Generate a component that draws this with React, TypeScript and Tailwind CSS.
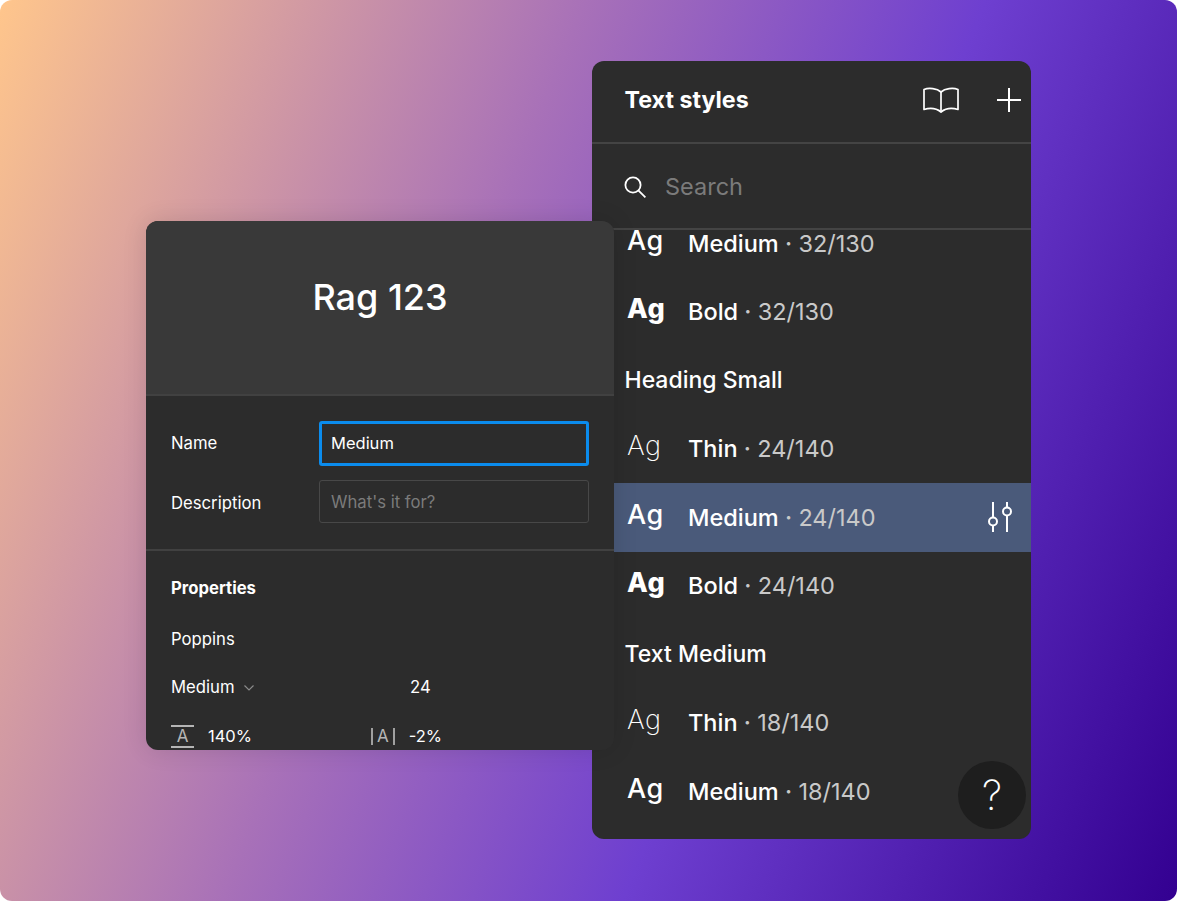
const Sep = () => <span className="text-[#c9c9c9]"> · </span>;

function Row({ ag, name, val, active, low }: { ag: string; name: string; val: string; active?: boolean; low?: boolean }) {
  return (
    <div className={`flex h-[68.5px] items-center pl-[35px] pr-[17px] ${active ? "bg-[#4a5a7a]" : ""}`}>
      <span className={`w-[61px] -translate-y-[3.5px] text-[27px] leading-none tracking-[0.5px] text-white ${ag}`}>Ag</span>
      <span className={`text-[23.5px] font-medium leading-none text-white ${low ? "pt-[1px]" : ""}`}>
        {name}
        <Sep />
        <span className="font-normal text-[#c9c9c9]">{val}</span>
      </span>
      {active && (
        <svg className="ml-auto" width="28" height="32" viewBox="0 0 28 32" fill="none" stroke="#fff" strokeWidth="2">
          <path d="M7 1v15M7 25v6M21 1v5M21 15v16" />
          <circle cx="7" cy="20.5" r="4" />
          <circle cx="21" cy="10.5" r="4" />
        </svg>
      )}
    </div>
  );
}

function Heading({ children }: { children: string }) {
  return <div className="flex h-[68.5px] items-center pl-[32.5px] pt-[1px] text-[23px] font-medium leading-none text-white">{children}</div>;
}

export default function App() {
  return (
    <div className="h-[901px] w-[1177px] overflow-hidden bg-white font-['Inter',sans-serif]">
      <div className="relative h-full w-full overflow-hidden rounded-xl bg-[linear-gradient(112deg,#ffc68c_0%,#a871b8_38%,#6e3fd0_64%,#330091_100%)]">
        {/* Right window */}
        <div className="absolute left-[592px] top-[61px] flex h-[778px] w-[439px] flex-col overflow-hidden rounded-xl bg-[#2c2c2c]">
          <div className="flex h-[81px] shrink-0 items-center pb-[3px] pl-[32.5px] pr-[10px]">
            <span className="text-[23.25px] font-bold leading-none text-white">Text styles</span>
            <svg className="ml-auto" width="38" height="26" viewBox="0 0 38 26" fill="none" stroke="#fff" strokeWidth="1.7" strokeLinejoin="round">
              <path d="M19 5C15 1.5 7 .5 2 2.5V22.5C7 21 14 21 19 25C24 21 31 21 36 22.5V2.5C31 .5 23 1.5 19 5Z" />
              <path d="M19 5V25" />
            </svg>
            <svg className="ml-[37px]" width="24" height="24" viewBox="0 0 24 24" fill="none" stroke="#fff" strokeWidth="2">
              <path d="M12 0v24M0 12h24" />
            </svg>
          </div>
          <div className="h-[2px] shrink-0 bg-[#444444]" />
          <div className="flex h-[84px] shrink-0 items-center pl-[32px] pt-[2px]">
            <svg width="22" height="22" viewBox="0 0 22 22" fill="none" stroke="#fff" strokeWidth="1.8">
              <circle cx="9" cy="9" r="7.6" />
              <path d="M14.6 14.6L21.4 21.4" />
            </svg>
            <span className="ml-[19px] text-[23.5px] leading-none text-[#7b7b7b]">Search</span>
          </div>
          <div className="h-[2px] shrink-0 bg-[#444444]" />
          <div className="min-h-0 flex-1 overflow-hidden">
            <div className="-mt-[21px]">
              <Row ag="font-[450]" name="Medium" val="32/130" low />
              <Row ag="font-extrabold" name="Bold" val="32/130" />
              <Heading>Heading Small</Heading>
              <Row ag="font-extralight" name="Thin" val="24/140" />
              <Row ag="font-[450]" name="Medium" val="24/140" active low />
              <Row ag="font-extrabold" name="Bold" val="24/140" />
              <Heading>Text Medium</Heading>
              <Row ag="font-extralight" name="Thin" val="18/140" />
              <Row ag="font-[450]" name="Medium" val="18/140" />
            </div>
          </div>
          <div className="absolute bottom-[10px] right-[5px] flex h-[68px] w-[68px] items-center justify-center rounded-full bg-[#1e1e1e] text-[41px] font-extralight leading-none text-white">?</div>
        </div>

        {/* Left window */}
        <div className="absolute left-[146px] top-[221px] flex h-[529px] w-[468px] flex-col overflow-hidden rounded-xl bg-[#2c2c2c] shadow-[0_0_24px_rgba(0,0,0,0.12)]">
          <div className="flex h-[173px] shrink-0 justify-center bg-[#393939] pt-[55px]">
            <span className="text-[36px] font-medium leading-[42px] text-white">Rag 123</span>
          </div>
          <div className="h-[2px] shrink-0 bg-[#414141]" />
          <div className="flex flex-col gap-[14px] pl-[25px] pr-[25px] pt-[25px]">
            <div className="flex items-center">
              <span className="w-[148px] text-[16.7px] leading-none text-white">Name</span>
              <div className="flex h-[45px] flex-1 items-center rounded-[3px] border-[3px] border-[#0b8ced] px-[9px] text-[16.5px] leading-none text-white">Medium</div>
            </div>
            <div className="flex items-center">
              <span className="w-[148px] pt-[4px] text-[16.7px] leading-none text-white">Description</span>
              <div className="flex h-[43px] flex-1 items-center rounded-[3px] border border-[#484848] px-[11px] pt-[1px] text-[16.7px] leading-none text-[#7b7b7b]">What's it for?</div>
            </div>
          </div>
          <div className="mt-[26px] h-[2px] shrink-0 bg-[#414141]" />
          <div className="pl-[25px] text-[16.7px] leading-none text-white">
            <div className="mt-[29px] font-bold">Properties</div>
            <div className="mt-[34px]">Poppins</div>
            <div className="mt-[32px] flex items-center">
              <span className="w-[72px]">Medium</span>
              <svg width="12" height="8" viewBox="0 0 12 8" fill="none" stroke="#8a8a8a" strokeWidth="1.2">
                <path d="M1.5 1.5L6 6L10.5 1.5" />
              </svg>
              <span className="ml-[155px]">24</span>
            </div>
            <div className="mt-[29px] flex items-center">
              <span className="flex h-[23px] w-[23px] items-center justify-center border-y-2 border-[#b5b5b5] text-[17px] text-[#b5b5b5]">A</span>
              <span className="ml-[14px] text-[16.5px]">140%</span>
              <span className="ml-[119px] flex h-[17px] items-center border-x-2 border-[#a0a0a0] px-[4px] text-[17px] text-[#b5b5b5]">A</span>
              <span className="ml-[14px] text-[16.5px]">-2%</span>
            </div>
          </div>
        </div>
      </div>
    </div>
  );
}
